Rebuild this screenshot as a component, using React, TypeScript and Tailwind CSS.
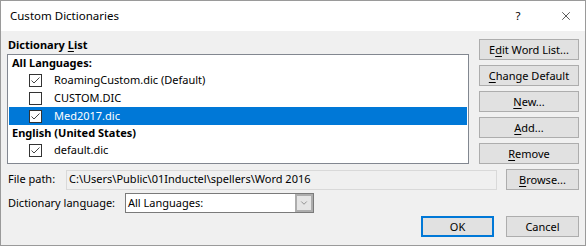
import { X, ChevronDown } from 'lucide-react';

interface Entry {
  kind: 'header' | 'item';
  label: string;
  checked?: boolean;
  selected?: boolean;
}

const entries: Entry[] = [
  { kind: 'header', label: 'All Languages:' },
  { kind: 'item', label: 'RoamingCustom.dic (Default)', checked: true },
  { kind: 'item', label: 'CUSTOM.DIC', checked: false },
  { kind: 'item', label: 'Med2017.dic', checked: true, selected: true },
  { kind: 'header', label: 'English (United States)' },
  { kind: 'item', label: 'default.dic', checked: true },
];

const CheckBox = ({ checked }: { checked?: boolean }) => (
  <div className="w-[13px] h-[13px] border border-[#333333] bg-white flex items-center justify-center shrink-0">
    {checked && (
      <svg width="11" height="11" viewBox="0 0 11 11">
        <polyline points="1.5,5.5 4,8 9.5,2.5" fill="none" stroke="#444444" strokeWidth="1" />
      </svg>
    )}
  </div>
);

// label with one underlined access key
const Key = ({ pre, k, post }: { pre?: string; k: string; post?: string }) => (
  <span>
    {pre}
    <span className="underline underline-offset-2">{k}</span>
    {post}
  </span>
);

const Btn = ({ children, w = 'w-[100px]' }: { children: React.ReactNode; w?: string }) => (
  <div className={`${w} h-[21px] bg-[#e1e1e1] border border-[#adadad] flex items-center justify-center leading-none`}>
    {children}
  </div>
);

export default function App() {
  return (
    <div
      className="w-[586px] h-[246px] border border-[#9a9a9a] bg-[#f0f0f0] text-[11px] text-black flex flex-col"
      style={{ fontFamily: '"Noto Sans", "Liberation Sans", sans-serif' }}
    >
      {/* title bar */}
      <div className="h-[30px] bg-white flex items-center pl-[9px] shrink-0 text-[11.5px]">
        <span className="flex-1">Custom Dictionaries</span>
        <span className="w-[14px] text-center mr-[34px]">?</span>
        <X className="w-[14px] h-[14px] mr-[12px]" strokeWidth={1.1} />
      </div>

      <div className="flex flex-col pl-[6px] pr-[6px]">
        <div className="flex">
          <div className="w-[462px] flex flex-col">
            <div className="mt-[6px] h-[17px] leading-[16px] pl-[1px] font-bold">
              <Key pre="Dictionary " k="L" post="ist" />
            </div>
            <div className="h-[110px] border border-[#828790] bg-white px-[1px] flex flex-col">
              {entries.map((e, i) =>
                e.kind === 'header' ? (
                  <div key={i} className="h-[16px] leading-[16px] pl-[3px] font-bold">
                    {e.label}
                  </div>
                ) : (
                  <div
                    key={i}
                    className={`h-[18px] flex items-center pl-[20px] gap-[12px] ${
                      e.selected ? 'bg-[#0078d7] text-white' : ''
                    }`}
                  >
                    <CheckBox checked={e.checked} />
                    <span>{e.label}</span>
                  </div>
                )
              )}
            </div>
          </div>
          <div className="ml-[10px] mt-[8px] flex flex-col gap-[5px]">
            <Btn><Key pre="E" k="d" post="it Word List..." /></Btn>
            <Btn><Key k="C" post="hange Default" /></Btn>
            <Btn><Key k="N" post="ew..." /></Btn>
            <Btn><Key k="A" post="dd..." /></Btn>
            <Btn><Key k="R" post="emove" /></Btn>
          </div>
        </div>

        <div className="flex items-center mt-[5px] h-[21px]">
          <span className="w-[59px] pl-[1px]">File path:</span>
          <div className="w-[431px] h-[20px] border border-[#d9d9d9] bg-[#f0f0f0] flex items-center pl-[2px]">
            C:\Users\Public\01Inductel\spellers\Word 2016
          </div>
          <div className="ml-[9px]">
            <Btn w="w-[73px]"><Key k="B" post="rowse..." /></Btn>
          </div>
        </div>

        <div className="flex items-center mt-[3px] h-[20px]">
          <span className="w-[118px] pl-[1px]">
            <Key pre="Dictionary lan" k="g" post="uage:" />
          </span>
          <div className="w-[189px] h-[20px] border border-[#7a7a7a] bg-white flex items-center">
            <span className="flex-1 pl-[2px]">All Languages:</span>
            <div className="w-[18px] h-[18px] border-2 border-[#adadad] bg-[#e5e5e5] flex items-center justify-center">
              <ChevronDown className="w-[10px] h-[10px] text-[#606060]" strokeWidth={1.5} />
            </div>
          </div>
        </div>

        <div className="flex justify-end mt-[3px] gap-[12px]">
          <div className="w-[73px] h-[21px] border-2 border-[#0078d7] bg-[#e1e1e1] flex items-center justify-center leading-none">
            OK
          </div>
          <Btn w="w-[73px]">Cancel</Btn>
        </div>
      </div>
    </div>
  );
}
